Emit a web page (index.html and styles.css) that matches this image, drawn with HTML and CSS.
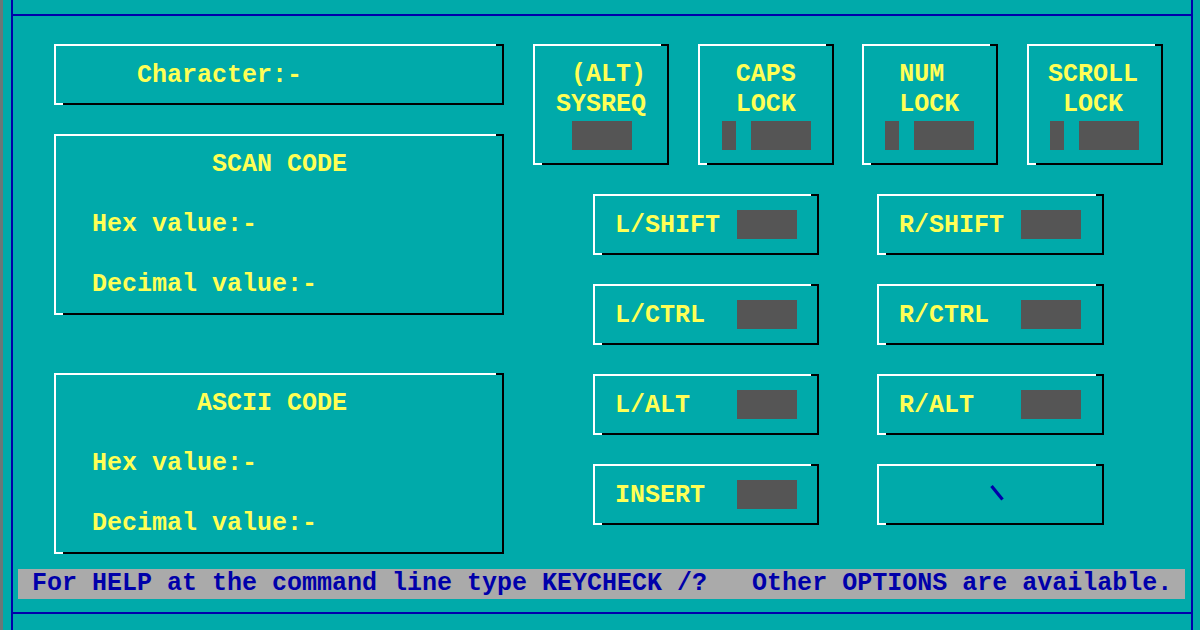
FILE: index.html
```html
<!DOCTYPE html>
<html lang="en">
<head>
<meta charset="utf-8">
<title>KEYCHECK</title>
<link rel="stylesheet" href="styles.css">
</head>
<body>
<div class="screen">
  <div class="strip"></div>
  <div class="frame">
    <div class="panel">
      <div class="layout">
        <div class="left-col">
          <div class="box char-box"><span class="line">   Character:-</span></div>
          <div class="box code-box scan-box">
            <span class="line">        SCAN CODE</span>
            <span class="line">Hex value:-</span>
            <span class="line">Decimal value:-</span>
          </div>
          <div class="box code-box ascii-box">
            <span class="line">       ASCII CODE</span>
            <span class="line">Hex value:-</span>
            <span class="line">Decimal value:-</span>
          </div>
        </div>
        <div class="right-col">
          <div class="keys">
            <div class="box key key-sys">
              <span class="line"> (ALT)</span>
              <span class="line">SYSREQ</span>
              <div class="leds"><span class="led"></span></div>
            </div>
            <div class="box key key-caps">
              <span class="line">CAPS</span>
              <span class="line">LOCK</span>
              <div class="leds"><span class="led led-small"></span><span class="led"></span></div>
            </div>
            <div class="box key key-num">
              <span class="line">NUM</span>
              <span class="line">LOCK</span>
              <div class="leds"><span class="led led-small"></span><span class="led"></span></div>
            </div>
            <div class="box key key-scroll">
              <span class="line">SCROLL</span>
              <span class="line"> LOCK</span>
              <div class="leds"><span class="led led-small"></span><span class="led"></span></div>
            </div>
          </div>
          <div class="mods">
            <div class="box mod"><span class="mod-label">L/SHIFT</span><span class="led"></span></div>
            <div class="box mod"><span class="mod-label">R/SHIFT</span><span class="led"></span></div>
            <div class="box mod"><span class="mod-label">L/CTRL</span><span class="led"></span></div>
            <div class="box mod"><span class="mod-label">R/CTRL</span><span class="led"></span></div>
            <div class="box mod"><span class="mod-label">L/ALT</span><span class="led"></span></div>
            <div class="box mod"><span class="mod-label">R/ALT</span><span class="led"></span></div>
            <div class="box mod"><span class="mod-label">INSERT</span><span class="led"></span></div>
            <div class="box mod mod-cursor">
              <svg class="tick" width="16" height="18" viewBox="0 0 16 18"><line x1="2.5" y1="2" x2="13.5" y2="15.5" stroke="#0000aa" stroke-width="3.2"/></svg>
            </div>
          </div>
        </div>
      </div>
      <div class="status">For HELP at the command line type KEYCHECK /?   Other OPTIONS are available.</div>
    </div>
  </div>
</div>
</body>
</html>
```

FILE: styles.css
```css
html, body {
  margin: 0;
  padding: 0;
}

body {
  width: 1200px;
  height: 630px;
  overflow: hidden;
  background: #00aaaa;
  font-family: "Liberation Mono", "Courier New", monospace;
  font-weight: bold;
  font-size: 25px;
  color: #ffff55;
}

.screen {
  display: flex;
  height: 630px;
}

.strip {
  width: 3px;
  background: #6a7878;
  flex: 0 0 3px;
}

.frame {
  margin-left: 8px;
  width: 1178px;
  border-left: 2px solid #0000aa;
  border-right: 2px solid #0000aa;
  height: 630px;
}

.panel {
  margin-top: 14px;
  border-top: 2px solid #0000aa;
  border-bottom: 2px solid #0000aa;
  padding-top: 28px;
  padding-bottom: 13px;
}

.layout {
  display: flex;
  align-items: flex-start;
}

.box {
  position: relative;
  box-sizing: border-box;
  border: 2px solid;
  border-color: #ffffff #000000 #000000 #ffffff;
}

.box::before {
  content: "";
  position: absolute;
  top: -2px;
  right: -2px;
  width: 8px;
  height: 2px;
  background: #000000;
}

.box::after {
  content: "";
  position: absolute;
  bottom: -2px;
  left: -2px;
  width: 9px;
  height: 2px;
  background: #ffffff;
}

.line {
  display: block;
  white-space: pre;
  line-height: 30px;
  height: 30px;
}

/* Left column */
.left-col {
  margin-left: 41px;
  width: 450px;
  display: flex;
  flex-direction: column;
}

.char-box {
  height: 61px;
  padding-left: 36px;
  padding-top: 2px;
  display: flex;
  align-items: center;
}

.code-box {
  height: 181px;
  padding: 14px 0 0 36px;
  display: flex;
  flex-direction: column;
  gap: 30px;
}

.scan-box {
  margin-top: 29px;
}

.ascii-box {
  margin-top: 58px;
}

/* Right column */
.right-col {
  margin-left: 29px;
  width: 630px;
}

.keys {
  display: flex;
  justify-content: space-between;
}

.key {
  width: 136px;
  height: 121px;
  padding-top: 14px;
}

.key-sys { padding-left: 21px; }
.key-caps { padding-left: 36px; }
.key-num { padding-left: 35px; }
.key-scroll { padding-left: 19px; }

.leds {
  display: flex;
  gap: 15px;
  margin-top: 1px;
}

.key-sys .leds { margin-left: 16px; }
.key-caps .leds { margin-left: -14px; }
.key-num .leds { margin-left: -14px; }
.key-scroll .leds { margin-left: 2px; }

.led {
  display: block;
  width: 60px;
  height: 29px;
  background: #555555;
  flex: 0 0 auto;
}

.led-small {
  width: 14px;
}

.mods {
  margin-top: 29px;
  margin-left: 60px;
  display: grid;
  grid-template-columns: 226px 227px;
  column-gap: 58px;
  row-gap: 29px;
}

.mod {
  height: 61px;
  padding-left: 20px;
  display: flex;
  align-items: center;
}

.mod-label {
  width: 122px;
  white-space: pre;
  line-height: 30px;
  padding-top: 2px;
}

.mod-cursor {
  padding-left: 0;
  justify-content: center;
}

.tick {
  display: block;
  margin-left: 13px;
  margin-top: -4px;
}

/* Status bar */
.status {
  margin: 15px 6px 0 5px;
  height: 30px;
  line-height: 30px;
  background: #aaaaaa;
  color: #0000aa;
  padding-left: 14px;
  white-space: pre;
}
```
